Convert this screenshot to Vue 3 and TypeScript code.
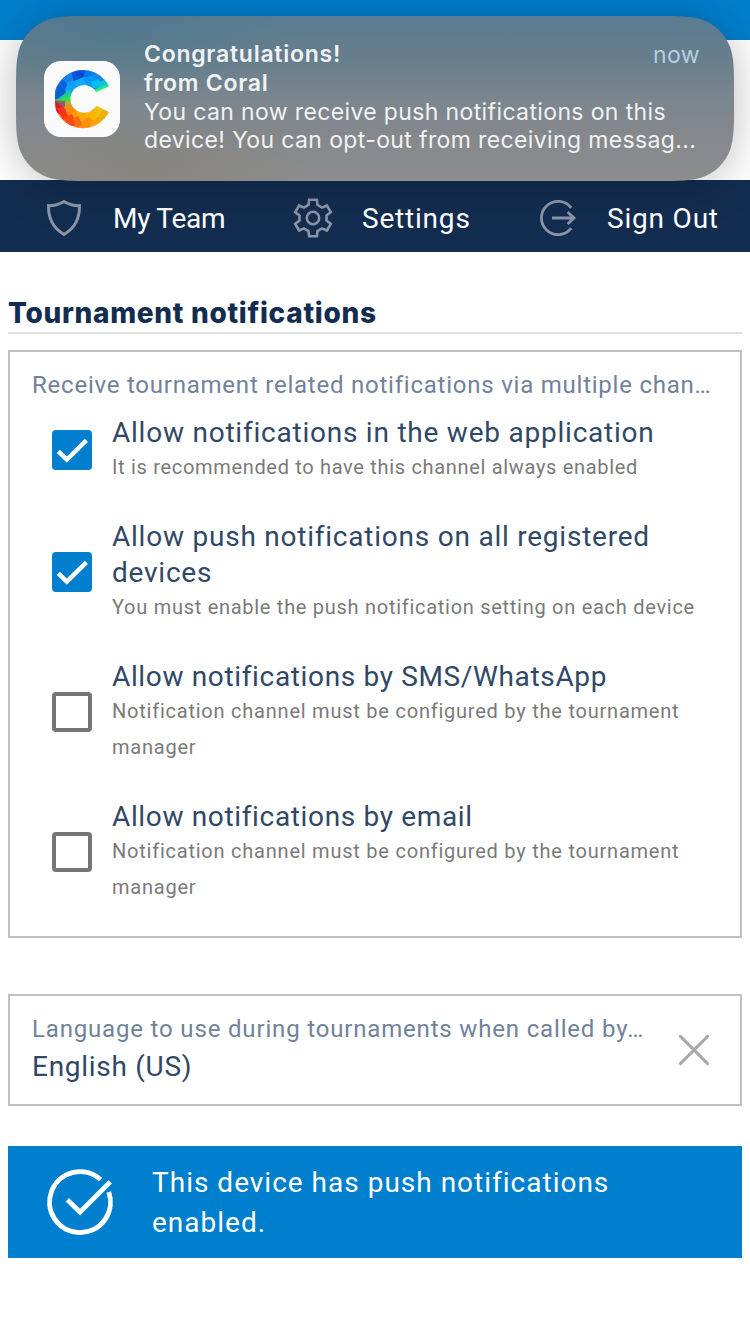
<script setup lang="ts">
interface ChannelOption {
  id: string
  title: string[]
  hint: string[]
  checked: boolean
}

const options: ChannelOption[] = [
  {
    id: 'web',
    title: ['Allow notifications in the web application'],
    hint: ['It is recommended to have this channel always enabled'],
    checked: true,
  },
  {
    id: 'push',
    title: ['Allow push notifications on all registered', 'devices'],
    hint: ['You must enable the push notification setting on each device'],
    checked: true,
  },
  {
    id: 'sms',
    title: ['Allow notifications by SMS/WhatsApp'],
    hint: ['Notification channel must be configured by the tournament', 'manager'],
    checked: false,
  },
  {
    id: 'email',
    title: ['Allow notifications by email'],
    hint: ['Notification channel must be configured by the tournament', 'manager'],
    checked: false,
  },
]

// Six-toothed gear outline around the centre of a 40x40 box.
const gearTooth: [number, number][] = [
  [-19, 13.8],
  [-12, 18.7],
  [12, 18.7],
  [19, 13.8],
]
const gearPoints = Array.from({ length: 6 }, (_, i) =>
  gearTooth
    .map(([deg, r]) => {
      const a = ((i * 60 + deg) * Math.PI) / 180
      return `${(20 + r * Math.sin(a)).toFixed(2)},${(20 - r * Math.cos(a)).toFixed(2)}`
    })
    .join(' '),
).join(' ')

const facets = [
  { p: '0,29 0,0 14,0 20,14 9,20', c: '#0a72e0' },
  { p: '2,18 8,9 14,15 9,22', c: '#0067e0' },
  { p: '0,30 3,17 12,20 9,24', c: '#0b5fd0' },
  { p: '8,9 17,2 20,12 13,15', c: '#1583ea' },
  { p: '16,0 30,0 30,7 19,12', c: '#0a55dc' },
  { p: '20,3 32,0 28,9', c: '#0c48d8' },
  { p: '30,0 44,0 42,9 28,9', c: '#0877e8' },
  { p: '10,20 13,12 20,11 21,18 14,24', c: '#12a0f2' },
  { p: '19,11 29,7 33,15 22,18', c: '#0fabfa' },
  { p: '28,8 39,5 42,13 32,16', c: '#009cfa' },
  { p: '38,3 48,4 55,14 43,14', c: '#1187e8' },
  { p: '36,12 44,9 46,18 38,18', c: '#00bcf6' },
  { p: '43,12 52,9 58,16 45,20', c: '#10c2e0' },
  { p: '38,20 45,17 58,13 44,24', c: '#22e87c' },
  { p: '10,20 15,19 17,24 13,27', c: '#16b8d8' },
  { p: '0,31 12,22 17,23 14,29', c: '#20c99a' },
  { p: '0,31 10,27 17,25 16,33', c: '#2be052' },
  { p: '0,30.5 13,31 10,38 3,40', c: '#8a6464' },
  { p: '0,31 7,36 6,45 1,42', c: '#e0152b' },
  { p: '10,31 17,31 18,38 10,39', c: '#c0a83a' },
  { p: '8,37 16,35 20,42 12,46', c: '#f88a18' },
  { p: '2,38 9,37 14,48 8,50', c: '#fb3020' },
  { p: '13,44 20,41 25,51 14,50', c: '#fd9808' },
  { p: '8,48 17,44 22,55 14,57', c: '#fd4a12' },
  { p: '18,49 26,44 32,52 22,58', c: '#fb6a10' },
  { p: '20,40 30,42 34,49 26,52', c: '#ffa908' },
  { p: '30,43 40,40 42,49 33,52', c: '#f9b505' },
  { p: '26,52 34,47 42,55 30,60', c: '#fb900c' },
  { p: '34,51 46,48 45,55 37,58', c: '#fba10a' },
  { p: '39,36 45,34 51,44 41,48', c: '#efc00a' },
  { p: '43,34 58,40 49,50', c: '#dcc418' },
  { p: '48,40 58,40 46,55 43,48', c: '#ebaf12' },
]
</script>

<template>
  <div class="screen">
    <div class="top-bar"></div>
    <div class="top-gap"></div>

    <nav class="nav">
      <a class="nav-item team">
        <svg class="nav-icon" viewBox="0 0 40 40">
          <path d="M20 3.6 Q11.5 8 4.5 7.6 C4.2 19.5 9 30 20 36.4 C31 30 35.8 19.5 35.5 7.6 Q28.5 8 20 3.6 Z" />
        </svg>
        <span>My Team</span>
      </a>
      <a class="nav-item settings">
        <svg class="nav-icon" viewBox="0 0 40 40">
          <polygon :points="gearPoints" />
          <circle cx="20" cy="20" r="6.2" />
        </svg>
        <span>Settings</span>
      </a>
      <a class="nav-item signout">
        <svg class="nav-icon" viewBox="0 0 40 40">
          <path d="M33.2 9.9 A16.6 16.6 0 1 0 33.2 30.1" />
          <path d="M14 20 H36 M29.6 14 L36 20 L29.6 26" />
        </svg>
        <span>Sign Out</span>
      </a>
    </nav>

    <main class="content">
      <h1 class="heading">Tournament notifications</h1>

      <section class="channels">
        <p class="legend">Receive tournament related notifications via multiple chan…</p>
        <div v-for="o in options" :key="o.id" class="option" :class="o.id">
          <span class="box" :class="{ on: o.checked }">
            <svg v-if="o.checked" viewBox="0 0 40 40">
              <path d="M6.3 21.4 L14.8 29.6 L34.4 10.4" />
            </svg>
          </span>
          <div class="option-text">
            <div class="option-title">
              <div v-for="line in o.title" :key="line">{{ line }}</div>
            </div>
            <div class="option-hint">
              <div v-for="line in o.hint" :key="line">{{ line }}</div>
            </div>
          </div>
        </div>
      </section>

      <section class="language">
        <div class="language-text">
          <div class="language-label">Language to use during tournaments when called by…</div>
          <div class="language-value">English (US)</div>
        </div>
        <svg class="clear" viewBox="0 0 32 32">
          <path d="M2.4 2.4 L29.6 29.6 M29.6 2.4 L2.4 29.6" />
        </svg>
      </section>

      <section class="status">
        <svg class="status-icon" viewBox="0 0 68 68">
          <path d="M54.6 11.6 A30.5 30.5 0 1 0 62.8 24" />
          <path d="M21.3 31.8 L34 44.2 L64.2 13.9" />
        </svg>
        <div class="status-text">
          <div>This device has push notifications</div>
          <div>enabled.</div>
        </div>
      </section>
    </main>

    <aside class="banner">
      <svg class="banner-shape" viewBox="0 0 718 165">
        <defs>
          <linearGradient id="glass" x1="0" y1="0" x2="0" y2="1">
            <stop offset="0" stop-color="#5a7c92" />
            <stop offset="0.25" stop-color="#667e8c" />
            <stop offset="0.5" stop-color="#7b868e" />
            <stop offset="0.78" stop-color="#87898c" />
            <stop offset="1" stop-color="#8d8d8e" />
          </linearGradient>
          <radialGradient id="tint-cool">
            <stop offset="0" stop-color="#47758a" stop-opacity="0.5" />
            <stop offset="1" stop-color="#47758a" stop-opacity="0" />
          </radialGradient>
          <radialGradient id="tint-warm">
            <stop offset="0" stop-color="#817c68" stop-opacity="0.4" />
            <stop offset="1" stop-color="#817c68" stop-opacity="0" />
          </radialGradient>
          <clipPath id="panel">
            <path d="M76.4 0 H641.6 C663.6 0 674.6 0 686.4 3.7 C699.4 8.5 709.5 18.6 714.3 31.6 C718 43.4 718 54.4 718 76.4 V88.6 C718 110.6 718 121.6 714.3 133.4 C709.5 146.4 699.4 156.5 686.4 161.3 C674.6 165 663.6 165 641.6 165 H76.4 C54.4 165 43.4 165 31.6 161.3 C18.6 156.5 8.5 146.4 3.7 133.4 C0 121.6 0 110.6 0 88.6 V76.4 C0 54.4 0 43.4 3.7 31.6 C8.5 18.6 18.6 8.5 31.6 3.7 C43.4 0 54.4 0 76.4 0 Z" />
          </clipPath>
        </defs>
        <g clip-path="url(#panel)">
          <rect width="718" height="165" fill="url(#glass)" />
          <ellipse cx="100" cy="15" rx="170" ry="70" fill="url(#tint-cool)" />
          <ellipse cx="130" cy="155" rx="170" ry="60" fill="url(#tint-warm)" />
        </g>
      </svg>

      <svg class="app-icon" viewBox="0 0 76 76">
        <rect width="76" height="76" rx="17" fill="#fafafa" />
        <g transform="translate(11 9)">
          <mask id="ring">
            <path
              d="M53.6 16 A28.8 28.8 0 1 0 53.6 42.2 L41.4 36.2 A14.2 14.2 0 1 1 41.4 21.6 Z"
              fill="#fff"
              stroke="#fff"
              stroke-width="0.8"
              stroke-linejoin="round"
            />
          </mask>
          <g mask="url(#ring)">
            <rect width="58" height="29" fill="#0b86ea" />
            <rect y="29" width="58" height="30" fill="#fb8d0a" />
            <polygon v-for="(f, i) in facets" :key="i" :points="f.p" :fill="f.c" />
          </g>
        </g>
      </svg>

      <div class="banner-text">
        <div class="banner-head">
          <strong>Congratulations!</strong>
          <span class="banner-time">now</span>
        </div>
        <strong class="banner-from">from Coral</strong>
        <div class="banner-line">You can now receive push notifications on this</div>
        <div class="banner-line">device! You can opt-out from receiving messag...</div>
      </div>
    </aside>
  </div>
</template>

<style>
body {
  background: #fff;
}
</style>

<style scoped>
.screen {
  position: relative;
  width: 750px;
  height: 1334px;
  overflow: hidden;
  background: #fff;
  font-family: Roboto, 'Liberation Sans', sans-serif;
  white-space: nowrap;
}

.top-bar {
  height: 40px;
  background: #007fce;
}

.top-gap {
  height: 140px;
}

.nav {
  display: flex;
  box-sizing: border-box;
  height: 72px;
  padding-top: 4px;
  background: #132d50;
}

.nav-item {
  display: flex;
  box-sizing: border-box;
  flex: none;
  align-items: center;
  gap: 29px;
  padding-left: 44px;
  color: #fff;
  font-size: 28px;
  line-height: 68px;
  letter-spacing: 0.8px;
}

.team {
  width: 249px;
  letter-spacing: -0.25px;
}

.settings {
  width: 245px;
}

.nav-item span {
  padding-top: 2px;
}

.nav-icon {
  width: 40px;
  height: 40px;
  fill: none;
  stroke: #8a96a7;
  stroke-width: 2.6;
}

.team .nav-icon {
  stroke-width: 3;
}

.signout .nav-icon {
  stroke-width: 2.8;
}

.content {
  padding: 0 8px;
}

.heading {
  height: 41px;
  margin: 0;
  padding-top: 39px;
  border-bottom: 2px solid #e1e1e1;
  color: #132d50;
  font: 800 28px/44px Inter, sans-serif;
  letter-spacing: 0.69px;
}

.channels {
  box-sizing: border-box;
  height: 588px;
  margin-top: 16px;
  padding: 15px 22px 0;
  border: 2px solid #c1c1c1;
}

.legend {
  margin: 0 0 11px;
  color: #71829a;
  font-size: 24px;
  line-height: 36px;
  letter-spacing: 0.77px;
}

.option {
  display: flex;
  align-items: center;
  gap: 20px;
  margin-bottom: 32px;
  padding-left: 20px;
}

.box {
  box-sizing: border-box;
  flex: none;
  width: 40px;
  height: 40px;
  border: 4px solid #757575;
  border-radius: 4px;
}

.box.on {
  border: 0;
  background: #007fce;
}

.box svg {
  display: block;
  fill: none;
  stroke: #fff;
  stroke-width: 4.4;
}

.option-title {
  padding-top: 1px;
  color: #304867;
  font-size: 28px;
  line-height: 36px;
  letter-spacing: 0.77px;
}

.sms .option-title,
.email .option-title {
  letter-spacing: 0.65px;
}

.option-hint {
  margin-top: -2px;
  padding-bottom: 1px;
  color: #7a7a7a;
  font-size: 20px;
  line-height: 36px;
  letter-spacing: 0.77px;
}

.web .option-hint {
  letter-spacing: 0.68px;
}

.push .option-hint {
  letter-spacing: 0.72px;
}

.language {
  display: flex;
  box-sizing: border-box;
  align-items: center;
  justify-content: space-between;
  height: 112px;
  margin-top: 56px;
  padding: 0 30px 0 22px;
  border: 2px solid #c1c1c1;
}

.language-text {
  padding-bottom: 2px;
}

.language-label {
  color: #71829a;
  font-size: 24px;
  line-height: 36px;
  letter-spacing: 0.83px;
}

.language-value {
  color: #304867;
  font-size: 28px;
  line-height: 40px;
  letter-spacing: 0.72px;
}

.clear {
  width: 32px;
  height: 32px;
  fill: none;
  stroke: #a9a9a9;
  stroke-width: 3;
  stroke-linecap: round;
}

.status {
  display: flex;
  align-items: center;
  gap: 38px;
  height: 112px;
  margin-top: 40px;
  padding-left: 38px;
  background: #007fce;
  color: #fff;
}

.status-icon {
  width: 68px;
  height: 68px;
  fill: none;
  stroke: #fff;
  stroke-width: 4.8;
}

.status-text {
  padding-top: 2px;
  font-size: 28px;
  line-height: 40px;
  letter-spacing: 1px;
}

.banner {
  position: absolute;
  top: 16px;
  left: 16px;
  display: flex;
  box-sizing: border-box;
  width: 718px;
  height: 165px;
  padding: 0 35px 0 28px;
}

.banner-shape {
  position: absolute;
  top: 0;
  left: 0;
  width: 718px;
  height: 165px;
  overflow: visible;
  filter: drop-shadow(0 2px 22px rgba(0, 0, 0, 0.26));
}

.app-icon {
  position: relative;
  flex: none;
  width: 76px;
  height: 76px;
  margin: 45px 24px 0 0;
}

.banner-text {
  position: relative;
  flex: 1;
  padding-top: 24px;
  color: #f0f2f3;
  font: 400 23px/29px Inter, sans-serif;
  letter-spacing: 0.37px;
}

.banner-head {
  display: flex;
  justify-content: space-between;
}

.banner-text strong {
  font-weight: 600;
  letter-spacing: 0.74px;
}

.banner-from {
  display: block;
}

.banner-line {
  line-height: 28px;
}

.banner-time {
  padding-top: 1px;
  margin: 0 -1px -1px 0;
  color: #b4cfe0;
}
</style>
